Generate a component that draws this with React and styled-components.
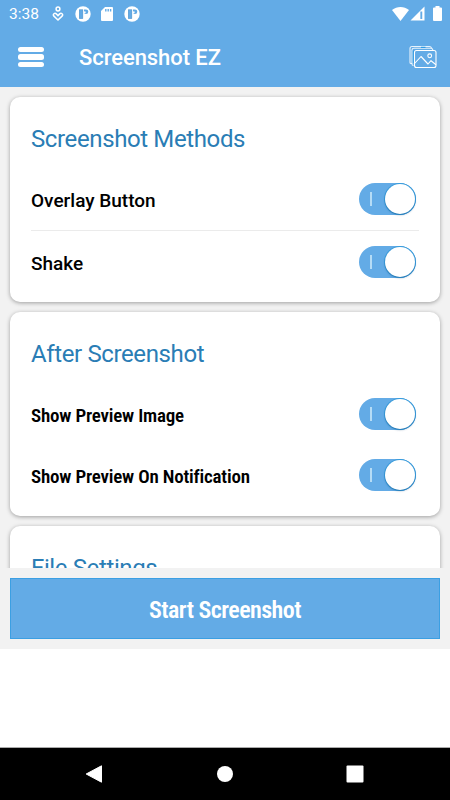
import React, {useState} from 'react';
import styled, {createGlobalStyle, css} from 'styled-components';

const App = () => {
    const [settings, setSettings] = useState({overlay: true, shake: true, image: true, notification: true});
    const toggle = (key) => setSettings({...settings, [key]: !settings[key]});
    return (
        <Screen>
            <GlobalStyle/>
            <Header>
                <StatusBar/>
                <Toolbar>
                    <MenuButton aria-label="Menu"><span/><span/><span/></MenuButton>
                    <AppTitle>Screenshot EZ</AppTitle>
                    <GalleryIcon/>
                </Toolbar>
            </Header>
            <Content>
                <Card $height="205px">
                    <CardTitle>Screenshot Methods</CardTitle>
                    <Row $height="63px" $divider>
                        <Label>Overlay Button</Label>
                        <Toggle on={settings.overlay} onClick={() => toggle('overlay')}/>
                    </Row>
                    <Row $height="62px">
                        <Label>Shake</Label>
                        <Toggle on={settings.shake} onClick={() => toggle('shake')}/>
                    </Row>
                </Card>
                <Card $height="204px">
                    <CardTitle>After Screenshot</CardTitle>
                    <Row $height="62px">
                        <Label $condensed>Show Preview Image</Label>
                        <Toggle on={settings.image} onClick={() => toggle('image')}/>
                    </Row>
                    <Row $height="60px">
                        <Label $condensed>Show Preview On Notification</Label>
                        <Toggle on={settings.notification} onClick={() => toggle('notification')}/>
                    </Row>
                </Card>
                <Card $height="204px">
                    <CardTitle>File Settings</CardTitle>
                </Card>
            </Content>
            <Footer>
                <StartButton><span>Start Screenshot</span></StartButton>
            </Footer>
            <NavBar>
                <svg width="18" height="20" viewBox="0 0 18 20"><path d="M16.5 1.8v16.4L1.2 10z" fill="#fff" stroke="#fff" strokeLinejoin="round"/></svg>
                <svg width="18" height="18" viewBox="0 0 18 18"><circle cx="9" cy="9" r="8" fill="#fff"/></svg>
                <svg width="18" height="18" viewBox="0 0 18 18"><rect x=".5" y=".5" width="17" height="17" rx="1" fill="#fff"/></svg>
            </NavBar>
        </Screen>
    )
}

const StatusBar = () => (
    <StatusRow>
        <Clock>3:38</Clock>
        <StatusIcons>
            <svg width="12" height="16" viewBox="0 0 12 16" fill="none" stroke="#fff" strokeWidth="1.5">
                <circle cx="6" cy="3" r="1.900"/>
                <path d="M6 14 1.700 9.900C.4 8.300 2.800 6.400 4.300 7.900L6 9.600l1.700-1.700c1.500-1.500 3.900.4 2.600 2z"/>
            </svg>
            <BadgeIcon/>
            <svg width="12" height="14" viewBox="0 0 12 14">
                <path d="M4 0h7Q12 0 12 1v12q0 1-1 1H1Q0 14 0 13V4z" fill="#fff"/>
                <path d="M4.800 2v2.500M7.200 2v2.500M9.600 2v2.500" stroke="#63abe6" strokeWidth="1.400"/>
            </svg>
            <BadgeIcon/>
        </StatusIcons>
        <SignalIcons>
            <svg width="17" height="14" viewBox="0 0 17 14"><path d="M0 3C5-.9 12-.9 17 3L8.500 14z" fill="#fff"/></svg>
            <svg width="15" height="15" viewBox="0 0 15 15">
                <path d="M14.500.5V14.500H.5z" fill="#fff"/>
                <path d="M11.300 5.500v7.500" stroke="#63abe6" strokeWidth="1.900"/>
            </svg>
            <svg width="9" height="15" viewBox="0 0 9 15"><path d="M2.500 0h4v1.500H8q1 0 1 1V14q0 1-1 1H1q-1 0-1-1V2.500q0-1 1-1h1.500z" fill="#fff"/></svg>
        </SignalIcons>
    </StatusRow>
)

const BadgeIcon = () => (
    <svg width="16" height="16" viewBox="0 0 16 16">
        <circle cx="8" cy="8" r="7.700" fill="#fff"/>
        <rect x="4.300" y="3.800" width="3.500" height="8.700" fill="#63abe6" stroke="#4a92cc" strokeWidth=".6"/>
        <path d="M9 3.500h2a2.300 2.300 0 0 1 0 4.600Q9 8.100 9 6z" fill="#63abe6"/>
        <circle cx="9.800" cy="6.200" r=".9" fill="#fff"/>
    </svg>
)

const GalleryIcon = () => (
    <svg width="28" height="24" viewBox="0 0 28 24" fill="none" stroke="#fff" strokeWidth="1.100" strokeLinejoin="round">
        <path d="M3 18.500H2Q1 18.500 1 17.500V3.500Q1 1.500 3 1.500h17.500Q22 1.500 22.500 3" opacity=".85"/>
        <path d="M4.500 20.500Q3 20.500 3 19V5Q3 3.300 5 3.300h17q1.500 0 2 2" opacity=".85"/>
        <path d="M4.300 18V5.500M12 2.400h4.500" stroke="#2f9be3"/>
        <rect x="5.500" y="5.500" width="21.500" height="17" rx="2"/>
        <path d="m5.500 18.500 6.500-7 7 7.500 3-3.300 5 4"/>
        <circle cx="20.700" cy="10.800" r="1.900"/>
    </svg>
)

const Toggle = ({on, onClick}) => (
    <Track role="switch" aria-checked={on} $on={on} onClick={onClick}>
        <Mark/>
        <Thumb/>
    </Track>
)

export default App;

const GlobalStyle = createGlobalStyle`
    * { box-sizing: border-box; }
    body { margin: 0; background: #fff; font-family: Roboto, sans-serif; }
    button { border: none; padding: 0; font-family: inherit; }
    svg { display: block; flex: none; }
`;

const condensed = css`
    white-space: nowrap;
    font-weight: 650;
    font-stretch: 75%;
    letter-spacing: -.2px;
`;

const Screen = styled.div`
    display: flex;
    flex-direction: column;
    width: 450px;
    height: 800px;
    overflow: hidden;
    background: #fff;
`;

const Header = styled.header`
    flex: none;
    height: 87px;
    color: #fff;
    background: #63abe6;
`;

const StatusRow = styled.div`
    display: flex;
    align-items: center;
    height: 27px;
    padding: 0 8px 0 9px;
`;

const Clock = styled.span`
    width: 43px;
    font-size: 15.500px;
    line-height: 27px;
    padding-top: 1px;
`;

const StatusIcons = styled.div`
    display: flex;
    align-items: center;
    gap: 10.500px;
`;

const SignalIcons = styled.div`
    display: flex;
    align-items: center;
    gap: 1px;
    margin-left: auto;
    svg:last-child { margin-left: 7px; }
`;

const Toolbar = styled.div`
    display: flex;
    align-items: center;
    height: 60px;
    padding: 0 13px 0 18px;
    > svg { margin-left: auto; }
`;

const MenuButton = styled.button`
    display: flex;
    flex-direction: column;
    gap: 2px;
    width: 26px;
    background: transparent;
    span { height: 5.300px; border-radius: 2.500px; background: #fff; }
`;

const AppTitle = styled.h1`
    margin: 2px 0 0 35px;
    font-size: 22px;
    font-weight: 480;
    line-height: 26px;
    letter-spacing: -.06px;
`;

const Content = styled.main`
    display: flex;
    flex-direction: column;
    gap: 10px;
    flex: none;
    height: 481px;
    padding: 10px;
    overflow: hidden;
    background: #f2f2f2;
`;

const Card = styled.section`
    flex: none;
    height: ${({$height}) => $height};
    padding: 27px 21px 0;
    border-radius: 10px;
    background: #fff;
    box-shadow: 0 1px 4px rgba(0, 0, 0, .35);
`;

const CardTitle = styled.h2`
    margin: 0 0 14px;
    font-size: 24px;
    font-weight: 430;
    line-height: 30px;
    letter-spacing: -.38px;
    color: #2a7db5;
`;

const Row = styled.div`
    display: flex;
    align-items: center;
    justify-content: space-between;
    height: ${({$height}) => $height};
    padding-right: 3px;
    ${({$divider}) => $divider && 'border-bottom: 1px solid #ebebeb;'}
`;

const Label = styled.span`
    padding-top: 3px;
    font-size: 19px;
    font-weight: 470;
    line-height: 24px;
    color: #000;
    ${({$condensed}) => $condensed && condensed}
`;

const Track = styled.button`
    display: flex;
    align-items: center;
    justify-content: space-between;
    flex-direction: ${({$on}) => $on ? 'row' : 'row-reverse'};
    width: 57px;
    height: 32px;
    padding: 0 1px 0 11px;
    border-radius: 17px;
    background: ${({$on}) => $on ? '#63abe6' : '#c4c4c4'};
`;

const Mark = styled.span`
    width: 2px;
    height: 14px;
    background: #b5dcf6;
`;

const Thumb = styled.span`
    width: 30px;
    height: 30px;
    border-radius: 50%;
    background: #fff;
    box-shadow: 0 1px 2px rgba(0, 60, 110, .45), 0 0 0 1px #3b9fdf;
`;

const Footer = styled.footer`
    flex: none;
    height: 81px;
    padding: 10px;
    background: #f2f2f2;
`;

const StartButton = styled.button`
    display: flex;
    align-items: center;
    justify-content: center;
    width: 100%;
    height: 61px;
    border: 1px solid #3b9fe3;
    color: #fff;
    background: #63abe6;
    font-size: 24px;
    span { ${condensed} margin-top: 2px; letter-spacing: -.54px; }
`;

const NavBar = styled.nav`
    display: flex;
    align-items: center;
    justify-content: space-between;
    height: 53px;
    margin-top: auto;
    padding: 0 86px 0 85px;
    border-top: 1px solid #aaa;
    background: #000;
`;
